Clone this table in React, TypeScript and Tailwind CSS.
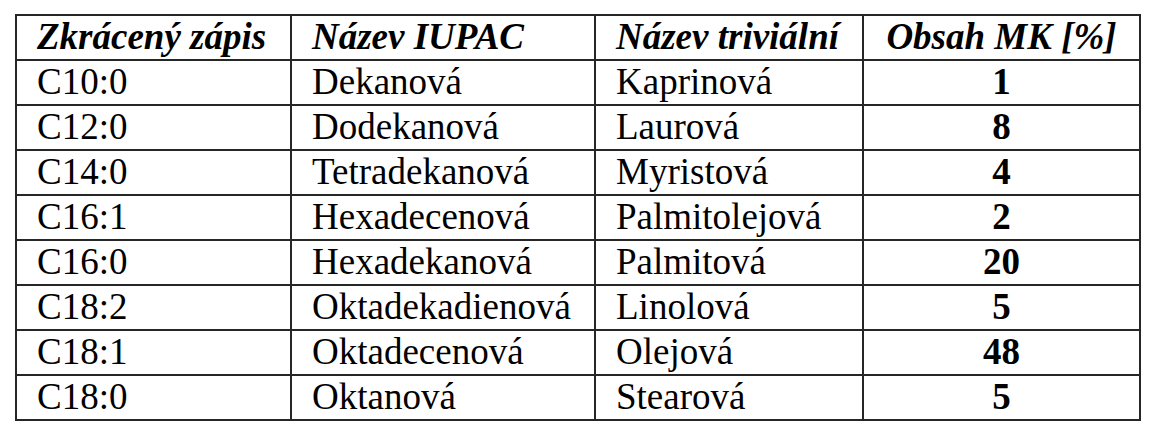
const rows: [string, string, string, string][] = [
  ["C10:0", "Dekanová", "Kaprinová", "1"],
  ["C12:0", "Dodekanová", "Laurová", "8"],
  ["C14:0", "Tetradekanová", "Myristová", "4"],
  ["C16:1", "Hexadecenová", "Palmitolejová", "2"],
  ["C16:0", "Hexadekanová", "Palmitová", "20"],
  ["C18:2", "Oktadekadienová", "Linolová", "5"],
  ["C18:1", "Oktadecenová", "Olejová", "48"],
  ["C18:0", "Oktanová", "Stearová", "5"],
];

export default function App() {
  const cell = "border-2 border-[#262626] h-[45px] p-0 align-middle";
  const left = `${cell} pl-[20px] text-left`;
  const mid = `${cell} text-center`;
  return (
    <div className="w-[1158px] h-[432px] bg-white pt-[14px] pl-[15px] text-black font-[family-name:'Liberation_Serif','Times_New_Roman',serif] text-[37px] leading-[1.15]">
      <table className="table-fixed border-collapse w-[1124px]">
        <colgroup>
          <col className="w-[275px]" />
          <col className="w-[304px]" />
          <col className="w-[268px]" />
          <col className="w-[277px]" />
        </colgroup>
        <thead>
          <tr className="font-bold italic">
            <th className={left}>Zkrácený zápis</th>
            <th className={left}>Název IUPAC</th>
            <th className={left}>Název triviální</th>
            <th className={mid}>Obsah MK [%]</th>
          </tr>
        </thead>
        <tbody>
          {rows.map(([a, b, c, d]) => (
            <tr key={a + b}>
              <td className={left}>{a}</td>
              <td className={left}>{b}</td>
              <td className={left}>{c}</td>
              <td className={`${mid} font-bold`}>{d}</td>
            </tr>
          ))}
        </tbody>
      </table>
    </div>
  );
}
